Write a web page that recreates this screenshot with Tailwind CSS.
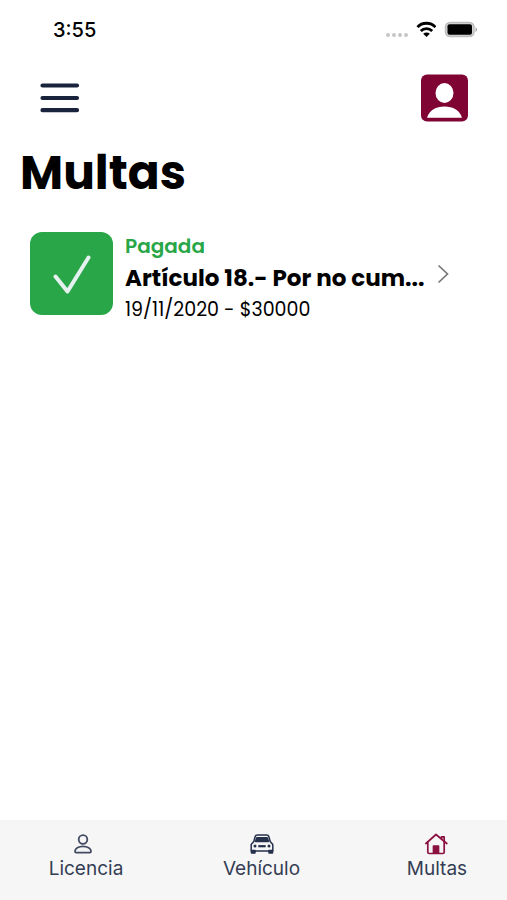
<!DOCTYPE html>
<html lang="es">
<head>
    <meta charset="UTF-8">
    <meta name="viewport" content="width=device-width, initial-scale=1.0">
    <title>Multas</title>
    <script src="https://cdn.jsdelivr.net/npm/@tailwindcss/browser@4"></script>
</head>
<body class="bg-white text-black min-h-screen flex flex-col font-[Poppins,Inter,sans-serif]">

    <!-- Status bar -->
    <div class="flex items-center justify-between h-15 pl-[53px] pr-[29px] font-[Inter,sans-serif]">
        <span class="text-xl font-medium">3:55</span>
        <div class="flex items-center gap-2">
            <svg class="w-6 h-5" viewBox="0 0 24 20" fill="#c6c6c8">
                <circle cx="4" cy="15" r="2"/>
                <circle cx="10" cy="15" r="2"/>
                <circle cx="16" cy="15" r="2"/>
                <circle cx="22" cy="15" r="2"/>
            </svg>
            <svg class="w-5 h-5" viewBox="0 0 20 20" fill="none" stroke="#000" stroke-width="2.8">
                <path d="M1.500 7.200C6 1.900 15 1.900 19.500 7.200"/>
                <path d="M4.800 11C8 7.800 13 7.800 16.200 11"/>
                <path d="M10.500 17L7.200 13.700C9 12.100 12 12.100 13.800 13.700Z" fill="#000" stroke="none"/>
            </svg>
            <svg class="w-[34px] h-5" viewBox="0 0 34 20">
                <rect x="1.500" y="2.500" width="28.500" height="14" rx="4.500" fill="#d5d5d7" stroke="#bdbdbf" stroke-width="1.500"/>
                <rect x="3.500" y="4.300" width="24.500" height="10.400" rx="2" fill="#000"/>
                <path d="M31.500 7.200C33.600 8 33.600 11 31.500 12Z" fill="#a9a9ab"/>
            </svg>
        </div>
    </div>

    <!-- Header -->
    <header class="flex items-center justify-between h-19 pl-10 pr-[38px]">
        <button type="button" aria-label="Menú">
            <svg class="w-10 h-8" viewBox="0 0 40 32" stroke="#19233c" stroke-width="4.200" stroke-linecap="round">
                <path d="M2.500 3.500H37M2.500 16H37M2.500 28.200H37"/>
            </svg>
        </button>
        <button type="button" aria-label="Perfil">
            <svg class="w-12 h-12" viewBox="0 0 48 48">
                <rect x="0" y="0.500" width="47" height="47" rx="6" fill="#7f0433"/>
                <ellipse cx="23.500" cy="19" rx="9" ry="10" fill="#fff"/>
                <path d="M6 43.700C8.500 36 15 32.500 23.500 32.500S38.500 36 41 43.700Z" fill="#fff"/>
            </svg>
        </button>
    </header>

    <main class="flex-1">
        <h1 class="px-5 pt-2 text-[47px] leading-[58px] font-bold">Multas</h1>

        <a href="#" class="flex items-start mt-[30px] pl-[30px] pr-[58px]">
            <span class="shrink-0 flex items-center justify-center w-[83px] h-[83px] rounded-xl bg-[#28a648]">
                <svg class="w-10 h-10" viewBox="0 0 40 40" fill="none" stroke="#e4f1ee" stroke-width="4" stroke-linecap="round" stroke-linejoin="round">
                    <path d="M3.500 22.500L15.500 37.500L36.500 3.500"/>
                </svg>
            </span>
            <span class="flex-1 min-w-0 ml-3 whitespace-nowrap">
                <span class="block text-xl leading-7 font-semibold text-[#28a648]">Pagada</span>
                <span class="block text-[23px] leading-9 font-bold">Artículo 18.- Por no cum...</span>
                <span class="block text-[19px] leading-7">19/11/2020 - $30000</span>
            </span>
            <svg class="shrink-0 w-3 h-5 mt-8" viewBox="0 0 12 20" fill="none" stroke="#77777a" stroke-width="1.700">
                <path d="M1.500 1.500L10.500 10L1.500 18.500"/>
            </svg>
        </a>
    </main>

    <!-- Bottom tabs -->
    <nav class="flex justify-between h-20 pt-3 pl-[38px] pr-[22px] bg-[#f6f6f7] text-[19px] leading-[26px] text-[#343d53] font-[Inter,sans-serif]">
        <a href="#" class="flex flex-col items-center w-24">
            <svg class="w-6 h-6" viewBox="0 0 24 24" fill="none" stroke="#414a60" stroke-width="1.800" stroke-linejoin="round">
                <circle cx="9" cy="7.500" r="4.300"/>
                <path d="M1 19.300C1 16.500 4.500 14.300 9 14.300S17 16.500 17 19.300Q17 20.600 15.800 20.600H2.200Q1 20.600 1 19.300Z"/>
            </svg>
            Licencia
        </a>
        <a href="#" class="flex flex-col items-center w-24">
            <svg class="w-6 h-6" viewBox="0 0 24 24" fill="none" stroke="#25304b" stroke-width="1.500" stroke-linejoin="round">
                <path d="M1.200 19V12.500L3.800 9.500L5.200 4.500Q5.600 3.100 7.500 3.100H16.500Q18.400 3.100 18.800 4.500L20.200 9.500L22.800 12.500V19Z"/>
                <path d="M5.500 9.400L6.800 5.800H17.200L18.500 9.400Z" fill="#25304b"/>
                <path d="M1.500 18.500H5V21H1.500ZM19 18.500H22.500V21H19Z" fill="#25304b"/>
                <path d="M8.300 14.200H15.700" stroke-width="2.200"/>
                <circle cx="5" cy="14" r="1.500" fill="#25304b" stroke="none"/>
                <circle cx="19" cy="14" r="1.500" fill="#25304b" stroke="none"/>
            </svg>
            Vehículo
        </a>
        <a href="#" aria-current="page" class="flex flex-col items-center w-24">
            <svg class="w-6 h-6" viewBox="1 0 24 24" fill="none" stroke="#8b1240" stroke-width="1.700" stroke-linecap="round" stroke-linejoin="round">
                <path d="M1.900 11.500L12 2.500L22.800 11.500"/>
                <path d="M3.800 10V20.200Q3.800 21.500 5.200 21.500H18.800Q20.200 21.500 20.200 20.200V10"/>
                <path d="M17.500 6.800V4.800H20.200V9"/>
                <path d="M9.500 21V14H14.500V21Z" fill="#8b1240"/>
            </svg>
            Multas
        </a>
    </nav>

</body>
</html>
